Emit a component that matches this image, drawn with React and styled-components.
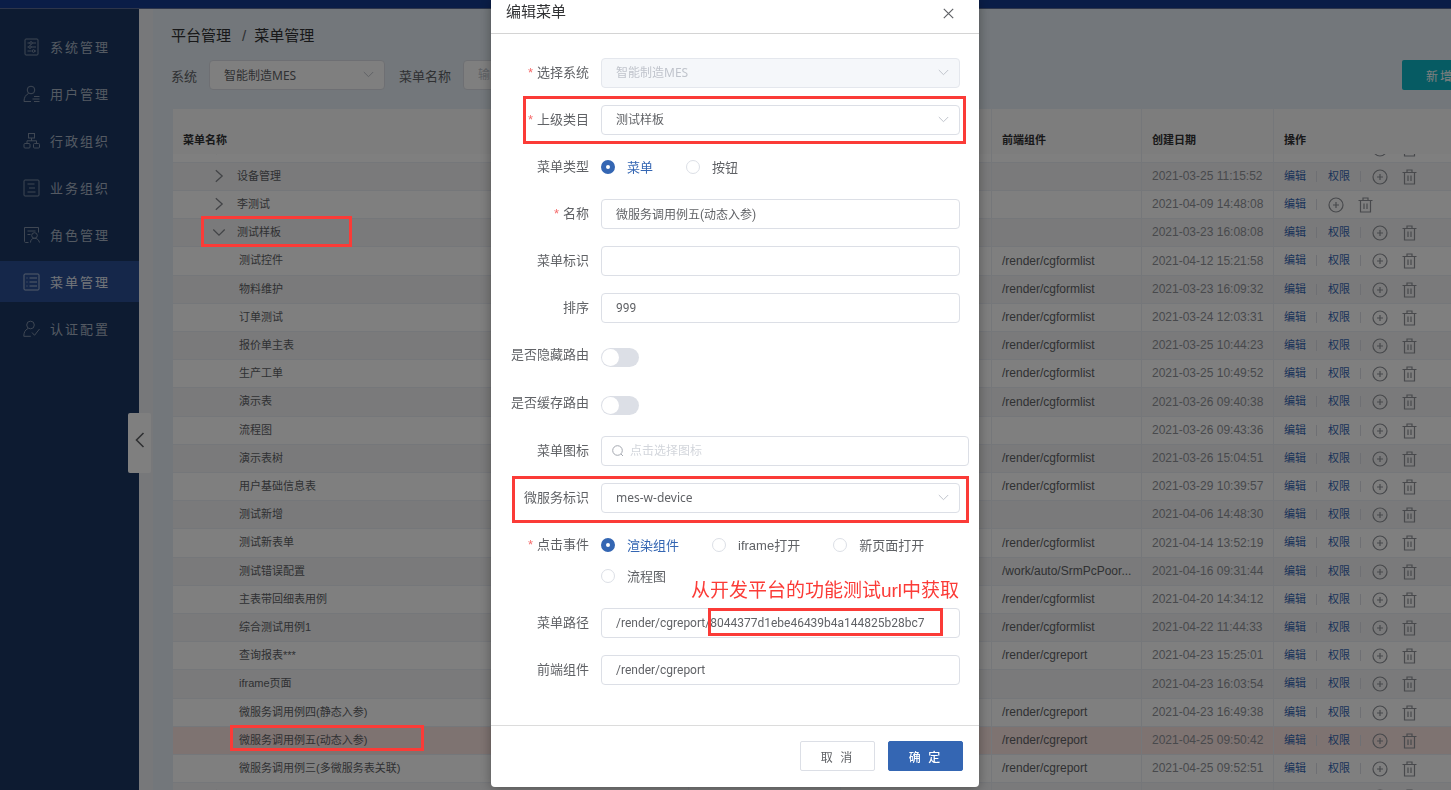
import React, { useLayoutEffect, useRef, useState } from 'react';
import styled, { createGlobalStyle } from 'styled-components';

const navItems = [
  { name: '系统管理', icon: 'system' },
  { name: '用户管理', icon: 'user' },
  { name: '行政组织', icon: 'org' },
  { name: '业务组织', icon: 'business' },
  { name: '角色管理', icon: 'role' },
  { name: '菜单管理', icon: 'menu' },
  { name: '认证配置', icon: 'auth' },
];

const rows = [
  { name: '', date: '', closed: true },
  { name: '设备管理', date: '2021-03-25 11:15:52', closed: true },
  { name: '李测试', date: '2021-04-09 14:48:08', closed: true, noAuth: true },
  { name: '测试样板', date: '2021-03-23 16:08:08', open: true },
  { name: '测试控件', path: '/render/cgformlist', date: '2021-04-12 15:21:58' },
  { name: '物料维护', path: '/render/cgformlist', date: '2021-03-23 16:09:32' },
  { name: '订单测试', path: '/render/cgformlist', date: '2021-03-24 12:03:31' },
  { name: '报价单主表', path: '/render/cgformlist', date: '2021-03-25 10:44:23' },
  { name: '生产工单', path: '/render/cgformlist', date: '2021-03-25 10:49:52' },
  { name: '演示表', path: '/render/cgformlist', date: '2021-03-26 09:40:38' },
  { name: '流程图', date: '2021-03-26 09:43:36' },
  { name: '演示表树', path: '/render/cgformlist', date: '2021-03-26 15:04:51' },
  { name: '用户基础信息表', path: '/render/cgformlist', date: '2021-03-29 10:39:57' },
  { name: '测试新增', date: '2021-04-06 14:48:30' },
  { name: '测试新表单', path: '/render/cgformlist', date: '2021-04-14 13:52:19' },
  { name: '测试错误配置', path: '/work/auto/SrmPcPoor...', date: '2021-04-16 09:31:44' },
  { name: '主表带回细表用例', path: '/render/cgformlist', date: '2021-04-20 14:34:12' },
  { name: '综合测试用例1', path: '/render/cgformlist', date: '2021-04-22 11:44:33' },
  { name: '查询报表***', path: '/render/cgreport', date: '2021-04-23 15:25:01' },
  { name: 'iframe页面', date: '2021-04-23 16:03:54' },
  { name: '微服务调用例四(静态入参)', path: '/render/cgreport', date: '2021-04-23 16:49:38' },
  { name: '微服务调用例五(动态入参)', path: '/render/cgreport', date: '2021-04-25 09:50:42', current: true },
  { name: '微服务调用例三(多微服务表关联)', path: '/render/cgreport', date: '2021-04-25 09:52:51' },
];

const navPaths = {
  system: (
    <>
      <rect x="2" y="1" width="13" height="16" rx="1" />
      <path d="M4.500 5h2M9.500 5h3.500M4.500 9h1M8.500 9h4.500M4.500 13h4M12 13h1" />
      <circle cx="8" cy="5" r="1.300" />
      <circle cx="7" cy="9" r="1.300" />
      <circle cx="10.500" cy="13" r="1.300" />
    </>
  ),
  user: (
    <>
      <circle cx="8" cy="5" r="3.800" />
      <path d="M5.500 8.500C2.500 10 1 12.500 1 16.500h7M11 11.500h5.500M9.500 14h7M11 16.500h5.500" />
    </>
  ),
  org: (
    <>
      <rect x="5.500" y="1.500" width="6" height="4.500" />
      <rect x="1" y="11.500" width="6" height="4.500" rx="1" />
      <rect x="10.500" y="11.500" width="6" height="4.500" rx="1" />
      <path d="M8.500 6v2.800M4 11.500V8.800h9.500v2.700" />
    </>
  ),
  business: (
    <>
      <rect x="1" y="1" width="15" height="16" rx="1" />
      <path d="M4.500 5h7M6 9h6M4.500 13h8" />
    </>
  ),
  role: (
    <>
      <path d="M5.500 16.500h-3c-1 0-1-1-1-1V1.500h14v5M4.500 5h8M4.500 8.500h3" />
      <circle cx="11.500" cy="9.500" r="2.800" />
      <path d="M7.500 16.500c0-2.500 1.500-4.300 4-4.300s4.300 1.800 5 4.300" />
    </>
  ),
  menu: (
    <>
      <rect x="1" y="1" width="15" height="16" rx="1" />
      <path d="M3.500 5h1M6.500 5H14M3.500 9h1M6.500 9H14M3.500 13h1M6.500 13H14" />
    </>
  ),
  auth: (
    <>
      <circle cx="7.500" cy="5" r="3.800" />
      <path d="M5 8.500C2 10 .8 12.500.8 16.300h7M9 12.500l2.500 2.800L16.500 9" />
    </>
  ),
};

const Chevron = ({ size = 11, d = 'M.8 3l4.700 4.700L10.200 3' }) => (
  <svg width={size} height={size} viewBox="0 0 11 11" fill="none" stroke="currentColor" aria-hidden="true">
    <path d={d} />
  </svg>
);

const PlusIcon = () => (
  <svg width="16" height="16" viewBox="0 0 16 16" fill="none" stroke="currentColor" strokeWidth="1.200" aria-hidden="true">
    <circle cx="8" cy="8" r="7" />
    <path d="M5 8h6M8 5v6" />
  </svg>
);

const TrashIcon = () => (
  <svg width="15" height="16" viewBox="0 0 15 16" fill="none" stroke="currentColor" strokeWidth="1.200" aria-hidden="true">
    <path d="M.5 3.500h14M5 3V1h5v2M2.500 3.500v11.500h10V3.500M6 6.500v5.500M9 6.500v5.500" />
  </svg>
);

function MenuRow({ row }) {
  return (
    <Row $current={row.current}>
      <NameCell $leaf={!row.closed && !row.open}>
        {row.closed && <Chevron size={14} d="M3 1l5 4.500L3 10" />}
        {row.open && <Chevron size={14} d="M1 3.500l4.500 4.500L10 3.500" />}
        <span>{row.name}</span>
      </NameCell>
      <td />
      <td />
      <td />
      <td>{row.path}</td>
      <DateCell>{row.date}</DateCell>
      <td>
        <Actions>
          <a href="#edit">{row.name && '编辑'}</a>
          <i />
          {!row.noAuth && <a href="#auth">{row.name && '权限'}</a>}
          {!row.noAuth && <i />}
          <button type="button" aria-label="新增下级"><PlusIcon /></button>
          <button type="button" aria-label="删除"><TrashIcon /></button>
        </Actions>
      </td>
    </Row>
  );
}

function SelectBox({ id, value, disabled }) {
  return (
    <SelectWrap $disabled={disabled}>
      <select id={id} disabled={disabled} defaultValue={value}>
        <option>{value}</option>
      </select>
      <Chevron />
    </SelectWrap>
  );
}

function FormItem({ id, label, required, children, ...rest }) {
  return (
    <Item {...rest}>
      <ItemLabel as={id ? 'label' : 'span'} htmlFor={id}>
        {required && <b>*</b>}
        {label}
      </ItemLabel>
      <ItemContent>{children}</ItemContent>
    </Item>
  );
}

function RadioGroup({ name, options }) {
  const [checked, setChecked] = useState(options[0]);
  return (
    <Radios role="radiogroup">
      {options.map((option) => (
        <RadioLabel key={option} $checked={checked === option}>
          <input type="radio" name={name} checked={checked === option} onChange={() => setChecked(option)} />
          {option}
        </RadioLabel>
      ))}
    </Radios>
  );
}

function EditDialog() {
  return (
    <Dialog role="dialog" aria-label="编辑菜单">
      <DialogHeader>
        <h2>编辑菜单</h2>
        <button type="button" aria-label="关闭">
          <svg width="11" height="11" viewBox="0 0 11 11" stroke="currentColor" strokeWidth="1.200" aria-hidden="true">
            <path d="M.8.8l9.400 9.400M10.200.8L.8 10.200" />
          </svg>
        </button>
      </DialogHeader>
      <Form>
        <FormItem id="system" label="选择系统" required>
          <SelectBox id="system" value="智能制造MES" disabled />
        </FormItem>
        <FormItem id="parent" label="上级类目" required>
          <SelectBox id="parent" value="测试样板" />
          <ParentMark />
        </FormItem>
        <FormItem label="菜单类型">
          <RadioGroup name="type" options={['菜单', '按钮']} />
        </FormItem>
        <FormItem id="name" label="名称" required>
          <Input id="name" defaultValue="微服务调用例五(动态入参)" />
        </FormItem>
        <FormItem id="code" label="菜单标识">
          <Input id="code" />
        </FormItem>
        <FormItem id="sort" label="排序">
          <Input id="sort" defaultValue="999" />
        </FormItem>
        <FormItem id="hidden" label="是否隐藏路由" $tall>
          <Switch id="hidden" type="checkbox" role="switch" />
        </FormItem>
        <FormItem id="cache" label="是否缓存路由" $tall>
          <Switch id="cache" type="checkbox" role="switch" />
        </FormItem>
        <FormItem id="icon" label="菜单图标" $wide>
          <SearchBox>
            <svg width="12" height="12" viewBox="0 0 12 12" fill="none" stroke="currentColor" aria-hidden="true">
              <circle cx="5.500" cy="5.500" r="4.800" />
              <path d="M9 9l2 2" />
            </svg>
            <input id="icon" placeholder="点击选择图标" />
          </SearchBox>
        </FormItem>
        <FormItem id="service" label="微服务标识">
          <SelectBox id="service" value="mes-w-device" />
          <ServiceMark />
        </FormItem>
        <FormItem label="点击事件" required>
          <RadioGroup name="event" options={['渲染组件', 'iframe打开', '新页面打开', '流程图']} />
        </FormItem>
        <FormItem id="path" label="菜单路径">
          <Input id="path" defaultValue="/render/cgreport/8044377d1ebe46439b4a144825b28bc7" />
          <PathMark />
          <PathNote>从开发平台的功能测试url中获取</PathNote>
        </FormItem>
        <FormItem id="component" label="前端组件">
          <Input id="component" defaultValue="/render/cgreport" />
        </FormItem>
      </Form>
      <DialogFooter>
        <DialogButton type="button">取 消</DialogButton>
        <DialogButton type="button" $primary>确 定</DialogButton>
      </DialogFooter>
    </Dialog>
  );
}

function App() {
  const scroller = useRef(null);

  useLayoutEffect(() => {
    scroller.current.scrollTop = 19;
  }, []);

  return (
    <>
      <GlobalStyle />
      <Shell>
        <TopBar />
        <Body>
          <Sidebar>
            {navItems.map((item) => (
              <NavLink key={item.name} href={`#${item.icon}`} $active={item.icon === 'menu'}>
                <svg width="18" height="18" viewBox="0 0 18 18" fill="none" stroke="currentColor" aria-hidden="true">
                  {navPaths[item.icon]}
                </svg>
                {item.name}
              </NavLink>
            ))}
            <Collapse type="button" aria-label="收起菜单">
              <svg width="10" height="16" viewBox="0 0 10 16" fill="none" stroke="currentColor" strokeWidth="1.600">
                <path d="M8.500 1L1.500 8l7 7" />
              </svg>
            </Collapse>
          </Sidebar>
          <Main>
            <Breadcrumb>
              <a href="#platform">平台管理</a>
              <span>/</span>
              <a href="#menu">菜单管理</a>
            </Breadcrumb>
            <Toolbar>
              <label htmlFor="filter-system">系统</label>
              <FilterField>
                <SelectBox id="filter-system" value="智能制造MES" />
              </FilterField>
              <label htmlFor="filter-name">菜单名称</label>
              <FilterField>
                <Input id="filter-name" placeholder="输入菜单名称" />
              </FilterField>
              <AddButton type="button">新增</AddButton>
            </Toolbar>
            <TableScroll ref={scroller}>
              <Table>
                <colgroup>
                  <col />
                  <col width="94" />
                  <col width="152" />
                  <col width="151" />
                  <col width="150" />
                  <col width="132" />
                  <col width="196" />
                </colgroup>
                <thead>
                  <tr>
                    <th>菜单名称</th>
                    <th />
                    <th />
                    <th />
                    <th>前端组件</th>
                    <th>创建日期</th>
                    <th>操作</th>
                  </tr>
                </thead>
                <tbody>
                  {rows.map((row) => <MenuRow key={row.name} row={row} />)}
                  <MenuRow row={rows[0]} />
                </tbody>
              </Table>
            </TableScroll>
          </Main>
        </Body>
        <Overlay>
          <EditDialog />
        </Overlay>
        <ParentRowMark />
        <CurrentRowMark />
      </Shell>
    </>
  );
}

const GlobalStyle = createGlobalStyle`
  * {
    box-sizing: border-box;
  }
  body {
    margin: 0;
    overflow: hidden;
    font-family: "Liberation Sans", "Noto Sans CJK SC", sans-serif;
    font-size: 13px;
    color: #606266;
  }
  button, input, select {
    font-family: inherit;
  }
  a {
    color: inherit;
    text-decoration: none;
  }
`;

const Shell = styled.div`
  position: relative;
  display: flex;
  flex-direction: column;
  width: calc(100% + 19px);
  height: 100vh;
  overflow: hidden;
`;
const TopBar = styled.header`
  flex: none;
  height: 9px;
  background: #143a8e;
  border-bottom: 1px solid #5a6a94;
`;
const Body = styled.div`
  display: flex;
  flex: 1;
  min-height: 0;
`;
const Sidebar = styled.nav`
  position: relative;
  flex: none;
  display: flex;
  flex-direction: column;
  gap: 6px;
  width: 139px;
  padding-top: 17px;
  background: #1a3762;
`;
const NavLink = styled.a`
  display: flex;
  align-items: center;
  gap: 9px;
  height: 41px;
  padding-left: 23px;
  font-size: 13px;
  letter-spacing: 2px;
  color: ${(props) => (props.$active ? '#e4e9f2' : '#a9b4c5')};
  background: ${(props) => (props.$active ? '#2a4f94' : 'none')};
  svg {
    opacity: 0.7;
  }
`;
const Collapse = styled.button`
  position: absolute;
  top: 404px;
  right: -12px;
  z-index: 1;
  width: 23px;
  height: 60px;
  padding: 2px 0 0;
  border: 0;
  border-radius: 2px;
  background: #fff;
  color: #606266;
  svg {
    display: block;
    margin: -8px auto 0;
  }
`;
const Main = styled.main`
  flex: 1;
  min-width: 0;
  display: flex;
  flex-direction: column;
  padding-left: 20px;
  border-left: 14px solid #eff1f5;
  background: #e6eff6;
`;
const Breadcrumb = styled.div`
  display: flex;
  gap: 8px;
  margin: 16px 0 0 -2px;
  font-size: 15px;
  line-height: 22px;
  color: #303133;
  span {
    padding-left: 3px;
    color: #606266;
  }
`;
const Toolbar = styled.div`
  display: flex;
  align-items: center;
  gap: 12px;
  margin: 13px 0 19px -2px;
`;
const FilterField = styled.div`
  width: 176px;
  margin-right: 2px;
`;
const AddButton = styled.button`
  width: 68px;
  height: 30px;
  margin-left: auto;
  padding: 0 0 0 8px;
  border: 0;
  border-radius: 2px;
  background: #0cb6c6;
  color: #fff;
  font-size: 12px;
  letter-spacing: 2px;
`;
const TableScroll = styled.div`
  flex: 1;
  min-height: 0;
  overflow: hidden;
`;
const Table = styled.table`
  width: 100%;
  table-layout: fixed;
  border-spacing: 0;
  background: #fff;
  font-size: 12px;
  th, td {
    padding: 0 10px 1px;
    border-right: 1px solid #ebeef5;
    border-bottom: 1px solid #ebeef5;
    text-align: left;
    white-space: nowrap;
  }
  th {
    position: sticky;
    top: 0;
    z-index: 1;
    height: 45px;
    padding-top: 16px;
    border-bottom: 0;
    background: #fafafa;
    color: #303133;
    font-size: 11px;
  }
`;
const Row = styled.tr`
  height: 28px;
  background: ${(props) => (props.$current ? '#fde6e2' : '#fff')};
  &:nth-child(even) {
    background: ${(props) => (props.$current ? '#fde6e2' : '#f5f5f6')};
  }
  &:nth-child(5n) {
    height: 29px;
  }
`;
const NameCell = styled.td`
  && {
    padding-left: ${(props) => (props.$leaf ? '66px' : '39px')};
    padding-bottom: 2px;
    border-right: 0;
    font-size: 11px;
    line-height: 14px;
  }
  svg {
    margin-right: 11px;
    color: #85888e;
    vertical-align: middle;
  }
  span {
    vertical-align: middle;
  }
`;
const DateCell = styled.td`
  color: #909399;
`;
const Actions = styled.div`
  display: flex;
  align-items: center;
  font-size: 11px;
  line-height: 14px;
  color: #3466b3;
  a {
    min-width: 22px;
    padding-bottom: 1px;
  }
  i {
    width: 1px;
    height: 11px;
    margin: 0 11px 0 10px;
    background: #dcdfe6;
  }
  button {
    display: flex;
    margin-right: 14px;
    padding: 1px 0 0;
    border: 0;
    background: none;
    color: #909399;
  }
`;

const Overlay = styled.div`
  position: absolute;
  inset: 0;
  z-index: 2;
  display: flex;
  justify-content: center;
  align-items: flex-start;
  background: rgba(0, 0, 0, 0.5);
`;
const Dialog = styled.section`
  width: 488px;
  border-radius: 0 0 4px 4px;
  background: #fff;
  box-shadow: 0 1px 12px rgba(0, 0, 0, 0.35);
`;
const DialogHeader = styled.div`
  display: flex;
  justify-content: space-between;
  align-items: center;
  padding: 0 25px 9px 15px;
  border-bottom: 1px solid #d4d4d4;
  h2 {
    margin: 0;
    font-size: 15px;
    font-weight: 400;
    line-height: 24px;
    color: #303133;
  }
  button {
    display: flex;
    padding: 2px 0 0;
    border: 0;
    background: none;
    color: #606266;
  }
`;
const Form = styled.form`
  display: flex;
  flex-direction: column;
  gap: 16px;
  padding: 23px 19px 40px 0;
`;
const Item = styled.div`
  display: flex;
  min-height: ${(props) => (props.$tall ? '32px' : '31px')};
  margin-right: ${(props) => (props.$wide ? '-9px' : '0')};
`;
const ItemLabel = styled.label`
  flex: none;
  width: 110px;
  padding-right: 12px;
  line-height: 32px;
  height: 31px;
  text-align: right;
  b {
    margin-right: 4px;
    color: #f56c6c;
    font-weight: 400;
  }
`;
const ItemContent = styled.div`
  position: relative;
  display: flex;
  flex: 1;
  align-items: center;
  min-width: 0;
`;
const Input = styled.input`
  width: 100%;
  height: 30px;
  padding: 0 14px;
  border: 1px solid #dcdfe6;
  border-radius: 4px;
  background: #fff;
  color: #606266;
  font-family: Roboto, "Noto Sans CJK SC", sans-serif;
  font-size: 12px;
  outline: none;
  &::placeholder {
    color: #c0c4cc;
  }
`;
const SelectWrap = styled.div`
  position: relative;
  width: 100%;
  color: #c0c4cc;
  select {
    display: block;
    width: 100%;
    height: 30px;
    padding: 0 14px;
    border: 1px solid ${(props) => (props.$disabled ? '#e4e7ed' : '#dcdfe6')};
    border-radius: 4px;
    appearance: none;
    background: ${(props) => (props.$disabled ? '#f5f7fa' : '#fff')};
    color: ${(props) => (props.$disabled ? '#c0c4cc' : '#606266')};
    font-family: "Noto Sans", "Noto Sans CJK SC", sans-serif;
    font-size: 12px;
    opacity: 1;
  }
  svg {
    position: absolute;
    top: 9px;
    right: 11px;
    pointer-events: none;
  }
`;
const SearchBox = styled.div`
  display: flex;
  align-items: center;
  gap: 6px;
  width: 100%;
  height: 30px;
  padding: 0 10px;
  border: 1px solid #dcdfe6;
  border-radius: 4px;
  color: #a4a8b0;
  input {
    flex: 1;
    padding: 0;
    border: 0;
    outline: none;
    font-size: 12px;
  }
  input::placeholder {
    color: #d3d6dc;
  }
`;
const Switch = styled.input`
  appearance: none;
  width: 38px;
  height: 19px;
  margin: 4px 0 0;
  padding: 1px;
  border-radius: 10px;
  background: #dcdfe6;
  &::before {
    content: '';
    display: block;
    width: 17px;
    height: 17px;
    border-radius: 50%;
    background: #fff;
  }
  &:checked {
    background: #3466b3;
  }
  &:checked::before {
    margin-left: auto;
  }
`;
const Radios = styled.div`
  display: flex;
  flex-wrap: wrap;
  column-gap: 33px;
`;
const RadioLabel = styled.label`
  display: flex;
  align-items: center;
  gap: 12px;
  height: 31px;
  color: ${(props) => (props.$checked ? '#3466b3' : '#606266')};
  input {
    appearance: none;
    width: 14px;
    height: 14px;
    margin: 0;
    border: 1px solid #dcdfe6;
    border-radius: 50%;
    background: #fff;
  }
  input:checked {
    border: 5px solid #3466b3;
  }
`;
const DialogFooter = styled.div`
  display: flex;
  justify-content: flex-end;
  gap: 13px;
  padding: 15px 16px 16px;
  border-top: 1px solid #dcdcdc;
`;
const DialogButton = styled.button`
  width: 75px;
  height: 30px;
  padding: 0;
  border: 1px solid ${(props) => (props.$primary ? '#3466b3' : '#dcdfe6')};
  border-radius: 2px;
  background: ${(props) => (props.$primary ? '#3466b3' : '#fff')};
  color: ${(props) => (props.$primary ? '#fff' : '#606266')};
  font-size: 12px;
  font-weight: ${(props) => (props.$primary ? 500 : 400)};
  letter-spacing: 2px;
`;

/* red guide boxes drawn over the page */
const Mark = styled.div`
  position: absolute;
  z-index: 3;
  border: 3px solid #fb3b37;
  pointer-events: none;
`;
const ParentRowMark = styled(Mark)`
  top: 216px;
  left: 201px;
  width: 151px;
  height: 31px;
`;
const CurrentRowMark = styled(Mark)`
  top: 725px;
  left: 230px;
  width: 194px;
  height: 26px;
`;
const ParentMark = styled(Mark)`
  top: -8px;
  right: -6px;
  left: -78px;
  height: 48px;
`;
const ServiceMark = styled(Mark)`
  top: -6px;
  right: -9px;
  left: -89px;
  height: 47px;
`;
const PathMark = styled(Mark)`
  top: 1px;
  left: 107px;
  width: 235px;
  height: 28px;
`;
const PathNote = styled.span`
  position: absolute;
  right: 1px;
  bottom: 33px;
  color: #fb3b37;
  font-size: 19px;
  line-height: 28px;
  white-space: nowrap;
`;

export default App;
